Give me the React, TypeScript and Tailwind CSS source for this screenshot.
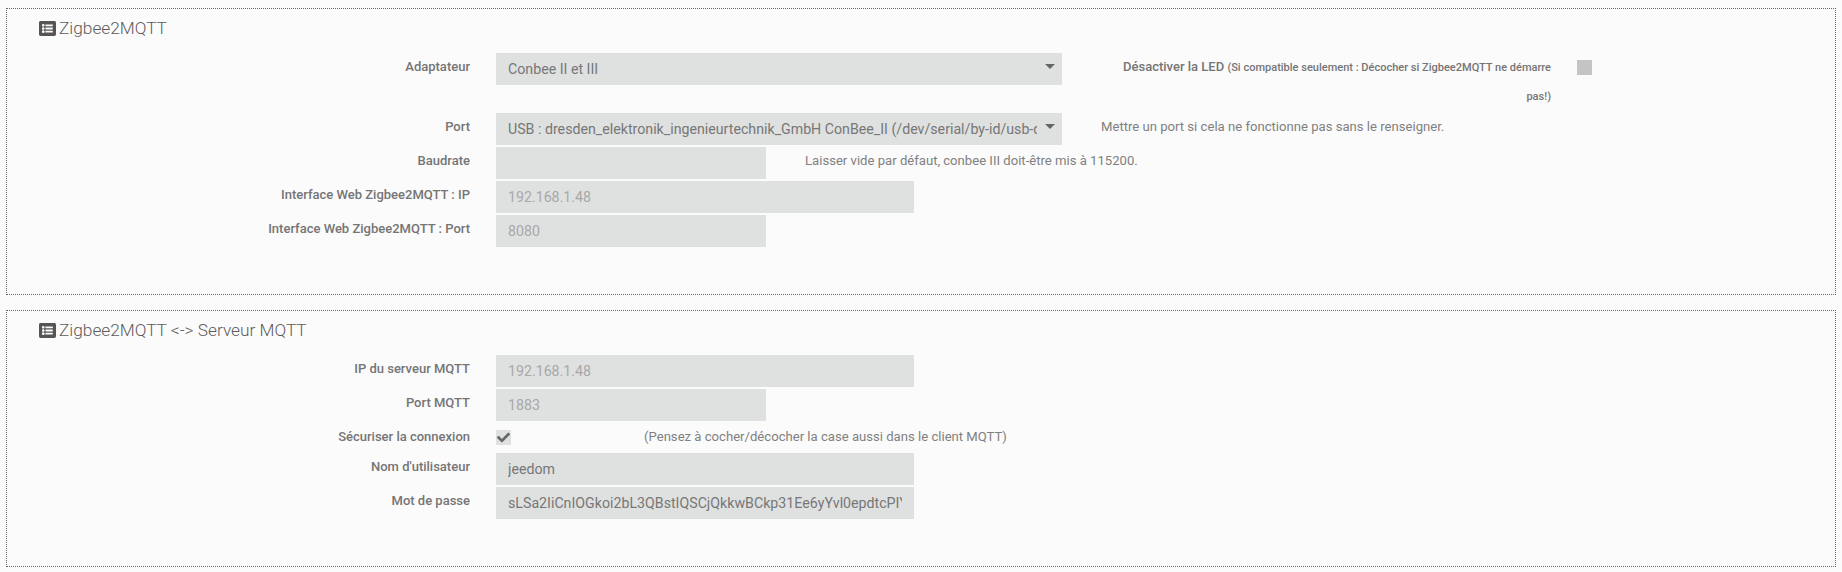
import { FaCheck, FaListAlt } from 'react-icons/fa'
import { ReactNode } from 'react'

function Legend({ children }: { children: ReactNode }) {
  return (
    <div className="flex items-center h-[26px] pl-[32px] mt-[6px] text-[#5c5c5c] text-[17.3px] font-light leading-[26px]">
      <FaListAlt className="w-[17px] h-[17px] mr-[3px] text-[#555555]" />
      {children}
    </div>
  )
}

function Label({ children }: { children: ReactNode }) {
  return (
    <label className="w-[463px] shrink-0 pt-[5px] text-right text-[13px] leading-[18px] font-medium text-[#757575]">
      {children}
    </label>
  )
}

function Field({ value, placeholder, width }: { value?: string; placeholder?: string; width: string }) {
  return (
    <input
      readOnly
      value={value ?? ''}
      placeholder={placeholder}
      className={`${width} h-[32px] shrink-0 px-3 bg-[#dfe1e0] text-[14.2px] text-[#777777] placeholder:text-[#a8a8a8] outline-none`}
    />
  )
}

function Select({ value }: { value: string }) {
  return (
    <div className="relative w-[566px] h-[32px] shrink-0 bg-[#dfe1e0] pl-3 pr-[25px] text-[14.2px] leading-[32px] text-[#777777]">
      <div className="overflow-hidden whitespace-nowrap">{value}</div>
      <div className="absolute right-[7px] top-[11px] w-0 h-0 border-x-[5px] border-x-transparent border-t-[5px] border-t-[#666666]" />
    </div>
  )
}

function Row({ className, children }: { className?: string; children: ReactNode }) {
  return <div className={`flex gap-[26px] mb-[2px] ${className ?? ''}`}>{children}</div>
}

function Hint({ left, children }: { left: string; children: ReactNode }) {
  return <span className={`${left} pt-[5px] text-[13.12px] leading-[18px] text-[#808080]`}>{children}</span>
}

export default function App() {
  return (
    <div className="w-[1842px] h-[572px] overflow-hidden bg-[#fbfbfb] pt-[8px] px-[6px] font-['Roboto',sans-serif]">
      <fieldset className="h-[287px] border border-dotted border-[#666666] mb-[15px]">
        <Legend>Zigbee2MQTT</Legend>
        <div className="mt-[12px]">
          <Row className="h-[58px]">
            <Label>Adaptateur</Label>
            <Select value="Conbee II et III" />
            <div className="w-[440px] ml-[23px] shrink-0 text-right text-[13px] leading-[28px] font-medium text-[#757575]">
              Désactiver la LED <span className="text-[11.03px]">(Si compatible seulement : Décocher si Zigbee2MQTT ne démarre pas!)</span>
            </div>
            <div className="w-[15px] h-[15px] mt-[7px] bg-[#c4c4c4]" />
          </Row>
          <Row>
            <Label>Port</Label>
            <Select value="USB : dresden_elektronik_ingenieurtechnik_GmbH ConBee_II (/dev/serial/by-id/usb-dresden_elektronik)" />
            <Hint left="ml-[13px]">Mettre un port si cela ne fonctionne pas sans le renseigner.</Hint>
          </Row>
          <Row>
            <Label>Baudrate</Label>
            <Field width="w-[270px]" />
            <Hint left="ml-[13px]">Laisser vide par défaut, conbee III doit-être mis à 115200.</Hint>
          </Row>
          <Row>
            <Label>Interface Web Zigbee2MQTT : IP</Label>
            <Field width="w-[418px]" placeholder="192.168.1.48" />
          </Row>
          <Row>
            <Label>Interface Web Zigbee2MQTT : Port</Label>
            <Field width="w-[270px]" placeholder="8080" />
          </Row>
        </div>
      </fieldset>

      <fieldset className="h-[257px] border border-dotted border-[#666666]">
        <Legend>Zigbee2MQTT &lt;-&gt; Serveur MQTT</Legend>
        <div className="mt-[12px]">
          <Row>
            <Label>IP du serveur MQTT</Label>
            <Field width="w-[418px]" placeholder="192.168.1.48" />
          </Row>
          <Row>
            <Label>Port MQTT</Label>
            <Field width="w-[270px]" placeholder="1883" />
          </Row>
          <Row className="h-[28px]">
            <Label>Sécuriser la connexion</Label>
            <div className="flex items-center justify-center w-[15px] h-[15px] mt-[7px] bg-[#dfe1e0] text-[#666666]">
              <FaCheck className="w-[13px] h-[13px]" />
            </div>
            <Hint left="ml-[107px]">(Pensez à cocher/décocher la case aussi dans le client MQTT)</Hint>
          </Row>
          <Row>
            <Label>Nom d'utilisateur</Label>
            <Field width="w-[418px]" value="jeedom" />
          </Row>
          <Row>
            <Label>Mot de passe</Label>
            <Field width="w-[418px]" value="sLSa2IiCnIOGkoi2bL3QBstIQSCjQkkwBCkp31Ee6yYvl0epdtcPIYwz" />
          </Row>
        </div>
      </fieldset>
    </div>
  )
}
